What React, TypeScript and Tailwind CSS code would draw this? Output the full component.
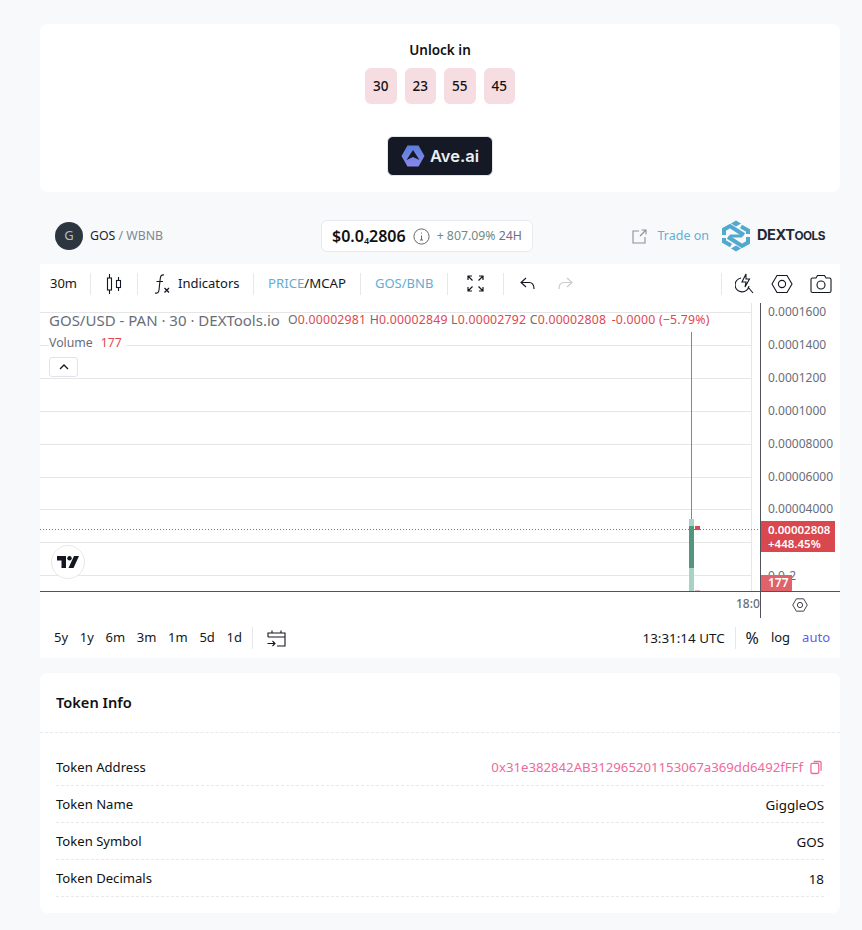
import React from "react";

const font = { fontFamily: '"Noto Sans", sans-serif' };

function Sep() {
  return <div className="w-px h-[22px] bg-[#e6e8ec] shrink-0" />;
}

function HexGear({ size = 22 }: { size?: number }) {
  return (
    <svg width={size} height={size} viewBox="0 0 22 22" fill="none" stroke="#131722" strokeWidth="1.1">
      <path d="M1 11 L6 2.5 H16 L21 11 L16 19.5 H6 Z" />
      <circle cx="11" cy="11" r="3.6" />
    </svg>
  );
}

function DexLogo() {
  return (
    <svg width="30" height="32" viewBox="0 0 30 32" fill="none" stroke="#52a9cf" strokeWidth="4">
      <path d="M3 15 V9.5 L9 6 L23 15" />
      <path d="M27 17 V22.5 L21 26 L7 17" />
      <path d="M20 6.5 L27 10.5 V14" />
      <path d="M10 25.5 L3 21.5 V18" />
      <path d="M9 16 L21 16" strokeWidth="3" />
      <path d="M15 0.5 L20 3.5 L15 6.5 L10 3.5 Z" fill="#52a9cf" stroke="none" />
      <path d="M15 25.5 L20 28.5 L15 31.5 L10 28.5 Z" fill="#52a9cf" stroke="none" />
    </svg>
  );
}

function Row({ label, value, pink }: { label: string; value: string; pink?: boolean }) {
  return (
    <div className="flex items-center justify-between h-[37px] pt-[2px] border-b border-dashed border-[#e8e9ec] text-[13.1px] text-[#111]">
      <span>{label}</span>
      {pink ? (
        <span className="flex items-center gap-[7px] text-[#ee6a9d] text-[13.2px] pr-[2px]">
          {value}
          <svg width="12" height="15" viewBox="0 0 13 15" fill="none" stroke="#ee6a9d" strokeWidth="1.4">
            <rect x="1" y="3" width="8.5" height="11" rx="1.5" />
            <path d="M4 1 H10.5 Q12 1 12 2.5 V11" />
          </svg>
        </span>
      ) : (
        <span className="text-[13.4px]">{value}</span>
      )}
    </div>
  );
}

const gridYs = [9, 42, 75, 108, 141, 174, 206, 239, 272];
const prices: [string, number][] = [
  ["0.0001600", 9],
  ["0.0001400", 42],
  ["0.0001200", 75],
  ["0.0001000", 108],
  ["0.00008000", 141],
  ["0.00006000", 174],
  ["0.00004000", 206],
];

export default function App() {
  return (
    <div className="w-[862px] h-[930px] bg-[#f8f9fb] pt-6 pl-10 pr-[22px] overflow-hidden" style={font}>
      {/* Unlock card */}
      <div className="h-[168px] bg-white rounded-lg flex flex-col items-center pt-[17px]">
        <div className="text-[13.5px] font-semibold leading-[18px] text-[#111]">Unlock in</div>
        <div className="flex gap-2 mt-[9px]">
          {["30", "23", "55", "45"].map((n) => (
            <div key={n} className="w-[31.5px] h-9 rounded-md bg-[#f6dde2] flex items-center justify-center text-[13.5px] font-medium text-[#111]">
              {n}
            </div>
          ))}
        </div>
        <div className="mt-[32px] w-[106px] h-[40px] rounded-md bg-[#151825] border border-[#e5e7eb] flex items-center justify-center gap-[5px]">
          <svg width="24" height="22" viewBox="0 0 24 22">
            <defs>
              <linearGradient id="ave" x1="0" y1="0" x2="0" y2="1">
                <stop offset="0" stopColor="#5a7fd8" />
                <stop offset="1" stopColor="#8a86ee" />
              </linearGradient>
            </defs>
            <path d="M6.5 0.5 H17.5 L23.5 11 L17.5 21.5 H6.5 L0.5 11 Z" fill="url(#ave)" />
            <path d="M12 5 L18.5 15 L12 12 L5.5 15 Z" fill="#151825" />
          </svg>
          <span className="text-[#eceef2] text-[16.5px] font-semibold" style={{ fontFamily: '"Inter", sans-serif' }}>Ave.ai</span>
        </div>
      </div>

      {/* Pair header */}
      <div className="h-[72px] pt-[16px] flex items-center justify-between pl-[15px] pr-[15px] relative">
        <div className="flex items-center gap-[7px]">
          <div className="w-7 h-7 rounded-full bg-[#2b3640] flex items-center justify-center text-[#b8bcc2] text-[13px]">G</div>
          <span className="text-[12.3px] text-[#1c2530]">GOS <span className="text-[#7d8894]">/ WBNB</span></span>
        </div>
        <div className="absolute left-[281px] top-[28px] w-[212px] h-8 bg-white rounded-md border border-[#e6eaf0] flex items-center pl-[10px] gap-[6px]">
          <span className="text-[16px] font-semibold text-[#111] whitespace-nowrap">$0.0<sub className="text-[9px]">4</sub>2806</span>
          <svg className="ml-[1px]" width="17" height="17" viewBox="0 0 17 17" fill="none" stroke="#666" strokeWidth="1">
            <circle cx="8.5" cy="8.5" r="7.6" />
            <path d="M8.5 7.5 V12 M7 12 H10 M8.5 4.6 V5.6" />
          </svg>
          <span className="text-[12.3px] ml-[1px] text-[#6f8a84] whitespace-nowrap">+ 807.09% <span className="text-[#6b7280]">24H</span></span>
        </div>
        <div className="flex items-center">
          <svg width="15" height="15" viewBox="0 0 15 15" fill="none" stroke="#8a8f96" strokeWidth="1.1">
            <path d="M7 2 H1 V14 H13 V8 M8 7 L14 1 M9.5 1 H14 V5.5" />
          </svg>
          <span className="text-[12.5px] text-[#62aed6] ml-[11px] mr-[12px]">Trade on</span>
          <DexLogo />
          <span className="ml-[6px] text-[14.6px] font-bold tracking-[-0.5px] text-[#1f2a36]" style={{ fontFamily: '"Inter", sans-serif' }}>DEXT<span className="text-[11.8px]">OOLS</span></span>
        </div>
      </div>

      {/* Chart widget */}
      <div className="bg-white h-[394px] flex flex-col">
        {/* toolbar */}
        <div className="h-[39px] flex items-center pl-[10px] pr-[8px] text-[13px] text-[#131722]">
          <span className="w-[40px]">30m</span>
          <Sep />
          <div className="w-[46px] flex justify-center">
            <svg width="16" height="22" viewBox="0 0 16 22" fill="none" stroke="#131722" strokeWidth="1.1">
              <rect x="1.5" y="5" width="4" height="12" />
              <path d="M3.5 1 V5 M3.5 17 V21" />
              <rect x="10.5" y="7.5" width="4" height="7" />
              <path d="M12.5 4 V7.5 M12.5 14.5 V18" />
            </svg>
          </div>
          <Sep />
          <div className="w-[115px] flex items-center pl-[16px]">
            <svg width="16" height="22" viewBox="0 0 16 22" fill="none" stroke="#131722" strokeWidth="1.1">
              <path d="M10 2 C7 1.5 6.5 3.5 6.2 6 L5 17 C4.7 20 3 20.5 1 20 M2.5 8.5 H9" />
              <path d="M10.5 15 L15 19.5 M15 15 L10.5 19.5" strokeWidth="1.3" />
            </svg>
            <span className="ml-[8px]">Indicators</span>
          </div>
          <Sep />
          <div className="w-[106px] pl-[14px] whitespace-nowrap text-[13.2px]"><span className="text-[#62aed6]">PRICE</span>/MCAP</div>
          <Sep />
          <div className="w-[86px] pl-[14px] text-[#62aed6] text-[13px]">GOS/BNB</div>
          <Sep />
          <div className="w-[55px] flex justify-center">
            <svg width="17" height="17" viewBox="0 0 17 17" fill="none" stroke="#131722" strokeWidth="1.2">
              <path d="M1 5 V1 H5 M1 1 L5.5 5.5 M12 1 H16 V5 M16 1 L11.5 5.5 M1 12 V16 H5 M1 16 L5.5 11.5 M12 16 H16 V12 M16 16 L11.5 11.5" />
            </svg>
          </div>
          <Sep />
          <div className="w-[46px] flex justify-center">
            <svg width="15" height="13" viewBox="0 0 15 13" fill="none" stroke="#131722" strokeWidth="1.1">
              <path d="M6 1 L1 5.5 L6 10 M1 5.5 H9 Q14 5.5 14 12" />
            </svg>
          </div>
          <div className="w-[30px] flex justify-center">
            <svg width="15" height="13" viewBox="0 0 15 13" fill="none" stroke="#c8cacd" strokeWidth="1.1">
              <path d="M9 1 L14 5.5 L9 10 M14 5.5 H6 Q1 5.5 1 12" />
            </svg>
          </div>
          <div className="flex-1" />
          <Sep />
          <div className="flex items-center gap-[17px] pl-[13px]">
            <svg width="19" height="22" viewBox="0 0 19 22" fill="none" stroke="#131722" strokeWidth="1.1">
              <path d="M6 5 A7 7 0 1 0 14 13 M13 14 L18 20" />
              <path d="M11 1 L7 9 H11 L10 14 L14.5 6 H11 Z" />
            </svg>
            <HexGear />
            <svg width="22" height="20" viewBox="0 0 22 20" fill="none" stroke="#131722" strokeWidth="1.1">
              <path d="M1 5.5 Q1 4 2.5 4 H6 L7.5 1.5 H14.5 L16 4 H19.5 Q21 4 21 5.5 V17 Q21 18.5 19.5 18.5 H2.5 Q1 18.5 1 17 Z" />
              <circle cx="11" cy="11" r="4" />
            </svg>
          </div>
        </div>

        {/* chart canvas */}
        <div className="relative h-[315px] overflow-hidden">
          {gridYs.map((y) => (
            <div key={y} className="absolute left-0 w-[711px] h-px bg-[#e6e6e6]" style={{ top: y }} />
          ))}
          <div className="absolute left-[711px] top-0 h-[288px] w-px bg-[#e6e6e6]" />
          <div className="absolute left-0 top-[226px] w-[720px] h-px bg-[repeating-linear-gradient(90deg,#c9565c_0,#c9565c_1px,transparent_1px,transparent_3px)]" />

          {/* legend */}
          <div className="absolute left-[9px] top-[7px] flex items-center whitespace-nowrap text-[#6a6d78]">
            <span className="text-[15px] leading-5">GOS/USD - PAN · 30 · DEXTools.io</span>
            <span className="ml-[8px] text-[12.3px] tracking-[0.2px]">
              O<span className="text-[#e0474f]">0.00002981</span> H<span className="text-[#e0474f]">0.00002849</span> L<span className="text-[#e0474f]">0.00002792</span> C<span className="text-[#e0474f]">0.00002808</span> <span className="text-[#e0474f] ml-[2px]">-0.0000 (−5.79%)</span>
            </span>
          </div>
          <div className="absolute left-[9px] top-[32px] flex gap-[8px] text-[12.3px] leading-4 bg-white pr-1 text-[#6a6d78]">
            <span>Volume</span><span className="text-[#e0474f]">177</span>
          </div>
          <div className="absolute left-[9px] top-[54px] w-[29px] h-[20px] bg-white rounded-[3px] border border-[#e0e3eb] flex items-center justify-center">
            <svg width="10" height="6" viewBox="0 0 10 6" fill="none" stroke="#131722" strokeWidth="1.3"><path d="M1 5 L5 1 L9 5" /></svg>
          </div>

          {/* TV logo */}
          <div className="absolute left-[11px] top-[242px] w-[34px] h-[34px] rounded-full bg-white border border-[#e8e8e8] flex items-center justify-center">
            <svg width="22" height="12" viewBox="0 0 22 12" fill="#131722">
              <path d="M0 0 H9 V12 H4.5 V4.5 H0 Z" />
              <circle cx="12.5" cy="2.2" r="2.2" />
              <path d="M17 0 H22 L16.5 12 H11.5 Z" />
            </svg>
          </div>

          {/* candles */}
          <div className="absolute left-[651px] top-[29px] w-px h-[187px] bg-[#5d9b87]" />
          <div className="absolute left-[649px] top-[216px] w-[5px] h-[7px] bg-[#a6d3c6]" />
          <div className="absolute left-[649px] top-[223px] w-[5px] h-[42px] bg-[#53957f]" />
          <div className="absolute left-[649px] top-[265px] w-[5px] h-[23px] bg-[#a6d3c6]" />
          <div className="absolute left-[655px] top-[223px] w-[5px] h-[4px] bg-[#d9474f]" />
          <div className="absolute left-[655px] top-[287px] w-[5px] h-px bg-[#eeb2b5]" />

          {/* axes */}
          <div className="absolute left-0 top-[288px] w-[800px] h-px bg-[#50535e]" />
          <div className="absolute left-[720px] top-0 h-[315px] w-px bg-[#50535e]" />
          {prices.map(([p, y]) => (
            <div key={p} className="absolute left-[728px] text-[12px] leading-4 text-[#6a6d78]" style={{ top: y - 8 }}>{p}</div>
          ))}
          <div className="absolute left-[728px] top-[265px] text-[12px] leading-4 text-[#6a6d78]">0.0₀2</div>
          <div className="absolute left-[721px] top-[218px] w-[74px] h-[31px] bg-[#d9474f] text-white text-[11.5px] font-semibold leading-[14px] pl-[7px] pt-[2px]">
            0.00002808<br />+448.45%
          </div>
          <div className="absolute left-[721px] top-[272px] w-[31px] h-4 bg-[#e0626a] text-white text-[12px] font-semibold leading-4 pl-[7px]">177</div>
          <div className="absolute left-[696px] top-[293px] text-[12px] font-medium leading-4 text-[#6a6d78]">18:0</div>
          <div className="absolute left-[752px] top-[294px]"><HexGear size={16} /></div>
        </div>

        {/* bottom bar */}
        <div className="flex-1 flex items-center pl-[14px] pr-[10px] text-[13px] text-[#131722]">
          <div className="flex gap-[11.7px]">
            {["5y", "1y", "6m", "3m", "1m", "5d", "1d"].map((t) => <span key={t}>{t}</span>)}
          </div>
          <div className="w-px h-[22px] bg-[#e6e8ec] ml-[10px] mr-[14px]" />
          <svg width="20" height="19" viewBox="0 0 20 19" fill="none" stroke="#131722" strokeWidth="1.1">
            <path d="M1 8 V4 H18 V17 H10 M1 8 H18 M5 1.5 V4 M14 1.5 V4" />
            <path d="M0.5 14.5 H8 M5.5 12 L8 14.5 L5.5 17" />
          </svg>
          <div className="flex-1" />
          <span className="text-[13.4px]">13:31:14 UTC</span>
          <div className="w-px h-[22px] bg-[#e6e8ec] ml-[10px] mr-[10px]" />
          <span className="text-[16px]">%</span>
          <span className="ml-[12px]">log</span>
          <span className="ml-[12px] text-[#5f5fe8]">auto</span>
        </div>
      </div>

      {/* Token Info */}
      <div className="mt-[15px] h-[240px] bg-white rounded-lg px-4">
        <div className="h-[60px] flex items-center text-[14.6px] font-semibold text-[#111] border-b border-dashed border-[#e8e9ec] -mx-4 px-4">Token Info</div>
        <div className="pt-4">
          <Row label="Token Address" value="0x31e382842AB312965201153067a369dd6492fFFf" pink />
          <Row label="Token Name" value="GiggleOS" />
          <Row label="Token Symbol" value="GOS" />
          <Row label="Token Decimals" value="18" />
        </div>
      </div>
    </div>
  );
}
